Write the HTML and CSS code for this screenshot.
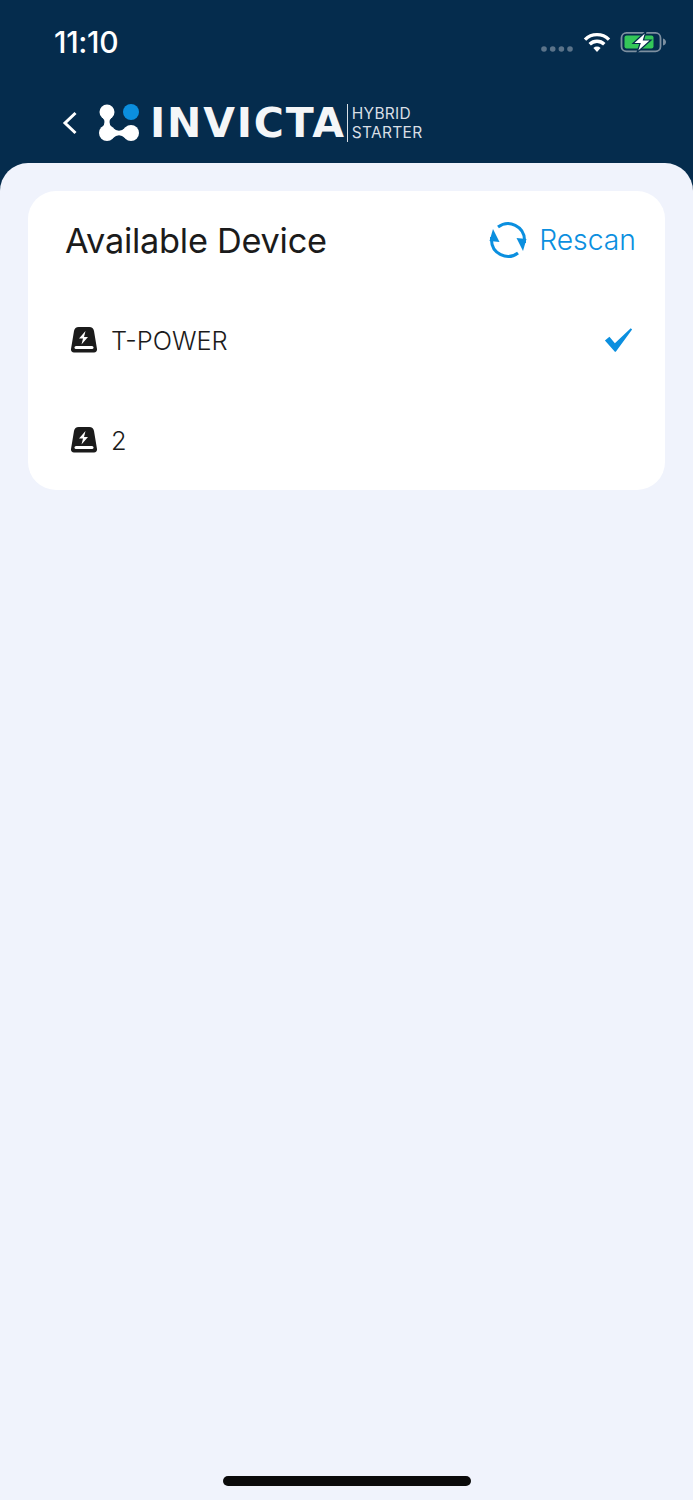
FILE: index.html
```html
<!DOCTYPE html>
<html lang="en">
<head>
  <meta charset="UTF-8">
  <meta name="viewport" content="width=device-width, initial-scale=1.0">
  <title>Available Device</title>
  <link rel="stylesheet" href="styles.css">
</head>
<body>
  <div class="top">
    <div class="status-bar">
      <span class="time">11:10</span>
      <div class="status-icons">
        <svg class="signal" width="32" height="6" viewBox="0 0 32 6"><g fill="#5b7389"><circle cx="3" cy="3" r="2.800"/><circle cx="11.700" cy="3" r="2.800"/><circle cx="20.400" cy="3" r="2.800"/><circle cx="29" cy="3" r="2.800"/></g></svg>
        <svg class="wifi" width="28" height="21" viewBox="0 0 28 21"><g fill="none" stroke="#fff" stroke-width="3.400"><path d="M2 7.600a17 17 0 0 1 24 0"/><path d="M6.700 12.300a10.400 10.400 0 0 1 14.600 0"/></g><path d="M10.400 16a5.200 5.200 0 0 1 7.200 0L14 20z" fill="#fff"/></svg>
        <svg class="battery" width="47" height="22" viewBox="0 0 47 22"><rect x="1.500" y="1.900" width="39" height="18.500" rx="5" fill="none" stroke="#7d8fa0" stroke-width="1.800"/><rect x="4.500" y="4.500" width="29" height="13" rx="2" fill="#34c759"/><path d="M43 7.500c2 .5 3 2 3 3.500s-1 3-3 3.500z" fill="#7d8fa0"/><path d="M26 .5 13 12.500h7L17 21.500 31 9h-7.500z" fill="#fff" stroke="#052c4d" stroke-width="1.200"/></svg>
      </div>
    </div>
    <div class="nav">
      <svg class="back" width="16" height="24" viewBox="0 0 16 24"><path d="M13.500 2 3 12l10.500 10" fill="none" stroke="#fff" stroke-width="3"/></svg>
      <svg class="logo-mark" width="40" height="38" viewBox="0 0 40 38">
        <path d="M3 13Q8 18 3 24L13 24Q8 18 13 13z" fill="#fff"/>
        <path d="M14 24Q20 29.500 26 24L26 34Q20 28.500 14 34z" fill="#fff"/>
        <circle cx="8" cy="8" r="7.500" fill="#fff"/>
        <circle cx="32" cy="8" r="8" fill="#0b8fdf"/>
        <circle cx="8" cy="29" r="8" fill="#fff"/>
        <circle cx="32" cy="29" r="8" fill="#fff"/>
      </svg>
      <span class="brand">INVICTA</span>
      <span class="brand-sub">HYBRID<br>STARTER</span>
    </div>
  </div>

  <div class="content">
    <div class="card">
      <div class="card-head">
        <span class="card-title">Available Device</span>
        <div class="rescan">
          <svg width="38" height="38" viewBox="0 0 38 38">
            <g fill="none" stroke="#0b8fdf" stroke-width="3">
              <path d="M9 6A16.500 16.500 0 0 1 35.500 19V22"/>
              <path d="M29 32A16.500 16.500 0 0 1 2.500 19V16"/>
            </g>
            <g fill="#0b8fdf">
              <path d="M4 8l6.500 13L.5 20z"/>
              <path d="M34 30l-6.500-13 10 1z"/>
            </g>
          </svg>
          <span>Rescan</span>
        </div>
      </div>
      <div class="device">
        <svg class="device-icon" width="28" height="26" viewBox="0 0 28 26"><path d="M9 0h10a5 5 0 0 1 5 4l3 18a3 3 0 0 1-3 3.500H4A3 3 0 0 1 1 22L4 4a5 5 0 0 1 5-4z" fill="#1b1b1b"/><rect x="4.500" y="19" width="19" height="3" rx="1.500" fill="#fff"/><path d="M15.500 4 9 11.500h4L11.500 17.500 18 10h-4z" fill="#fff"/></svg>
        <span class="device-name">T-POWER</span>
        <svg class="check" width="29" height="26" viewBox="0 0 32 28"><path d="M1 14.500 6 10.500l6 7L29.500 1 31 2.500 13 27h-1z" fill="#0b8fdf"/></svg>
      </div>
      <div class="device">
        <svg class="device-icon" width="28" height="26" viewBox="0 0 28 26"><path d="M9 0h10a5 5 0 0 1 5 4l3 18a3 3 0 0 1-3 3.500H4A3 3 0 0 1 1 22L4 4a5 5 0 0 1 5-4z" fill="#1b1b1b"/><rect x="4.500" y="19" width="19" height="3" rx="1.500" fill="#fff"/><path d="M15.500 4 9 11.500h4L11.500 17.500 18 10h-4z" fill="#fff"/></svg>
        <span class="device-name">2</span>
      </div>
    </div>
    <div class="home-bar"></div>
  </div>
</body>
</html>
```

FILE: styles.css
```css
* {
  box-sizing: border-box;
}

body {
  margin: 0;
  height: 1500px;
  font-family: Inter, "Liberation Sans", sans-serif;
  background-color: #052c4d;
  display: flex;
  flex-direction: column;
  overflow: hidden;
}

.top {
  height: 163px;
  padding: 22px 26px 0 54px;
}

.status-bar {
  height: 40px;
  display: flex;
  align-items: center;
  justify-content: space-between;
}

.time {
  color: #fff;
  font-size: 30px;
  font-weight: 500;
  letter-spacing: -0.3px;
}

.status-icons {
  display: flex;
  align-items: center;
}

.signal {
  margin-top: 14px;
  margin-right: 10px;
}

.wifi {
  margin-right: 9px;
}

.nav {
  display: flex;
  align-items: center;
  margin-top: 41px;
  margin-left: 8px;
}

.back {
  margin-right: 21px;
}

.logo-mark {
  margin-right: 11px;
}

.brand {
  color: #f4f6f8;
  font-family: "DejaVu Sans", sans-serif;
  font-size: 41px;
  line-height: 40px;
  font-weight: 700;
  letter-spacing: 1.8px;
}

.brand-sub {
  color: #d9dfe5;
  font-size: 15.500px;
  line-height: 19px;
  letter-spacing: 0.3px;
  margin-left: 1px;
  padding-left: 4px;
  border-left: 1px solid #d9dfe5;
}

.content {
  flex: 1;
  background-color: #f0f3fc;
  border-radius: 28px 28px 0 0;
  padding: 28px 28px 0;
  display: flex;
  flex-direction: column;
}

.card {
  background-color: #fff;
  border-radius: 28px;
  height: 299px;
  padding: 0 29px 0 38px;
}

.card-head {
  height: 100px;
  padding-bottom: 2px;
  display: flex;
  align-items: center;
  justify-content: space-between;
}

.card-title {
  color: #1b1b1b;
  font-size: 34.300px;
  letter-spacing: -0.25px;
  margin-left: -1px;
}

.rescan {
  display: flex;
  align-items: center;
  gap: 12px;
  color: #0b8fdf;
  font-size: 28.300px;
  font-weight: 300;
}

.device {
  height: 100px;
  padding-bottom: 2px;
  display: flex;
  align-items: center;
  color: #1b1b1b;
  font-size: 25.400px;
}

.device-icon {
  margin-left: 4px;
  margin-right: 13px;
}

.device-name {
  flex: 1;
  font-weight: 350;
}

.check {
  margin-right: 3px;
}

.home-bar {
  width: 248px;
  height: 10px;
  border-radius: 5px;
  background-color: #0a0a0a;
  margin: auto auto 14px;
}
```
